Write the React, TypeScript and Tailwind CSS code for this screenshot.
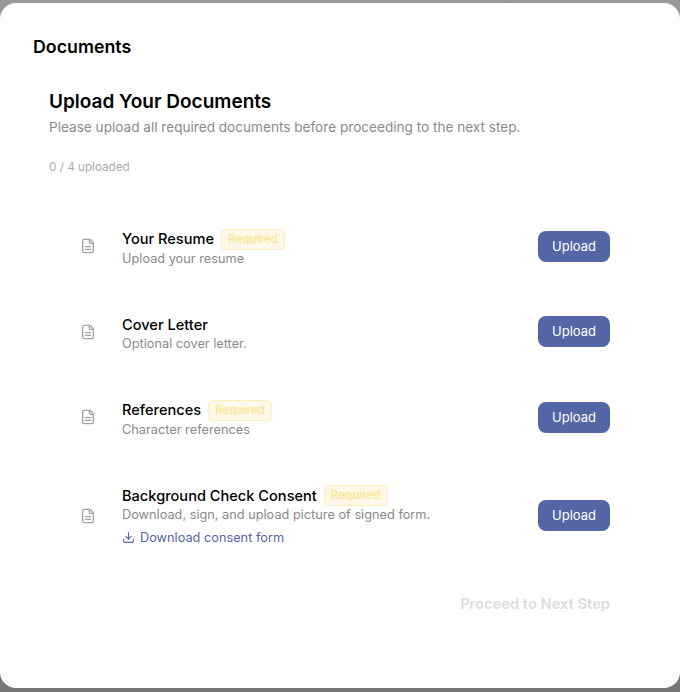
import { Download } from "lucide-react";

const docs = [
  { title: "Your Resume", required: true, desc: "Upload your resume" },
  { title: "Cover Letter", required: false, desc: "Optional cover letter." },
  { title: "References", required: true, desc: "Character references" },
  { title: "Background Check Consent", required: true, desc: "Download, sign, and upload picture of signed form.", link: true },
];

function FileIcon() {
  return (
    <svg width="16" height="16" viewBox="0 0 24 24" fill="none" stroke="#a3a3a3" strokeWidth="2" strokeLinecap="round" strokeLinejoin="round" className="shrink-0">
      <path d="M15 2H6a2 2 0 0 0-2 2v16a2 2 0 0 0 2 2h12a2 2 0 0 0 2-2V7Z" />
      <path d="M14 2v4a2 2 0 0 0 2 2h4" />
      <path d="M16 13H8" />
      <path d="M16 17H8" />
    </svg>
  );
}

export default function App() {
  return (
    <div className="h-[692px] w-[680px] overflow-hidden bg-[linear-gradient(#999999,#767676)] pt-[3px] pb-[4px] font-['Inter',sans-serif]">
      <div className="h-full rounded-2xl bg-white pt-[33px] pl-[33px] pr-[70px]">
        <h2 className="text-[17.8px] leading-[22px] font-semibold text-black">Documents</h2>
        <div className="mt-[30px] pl-4">
          <h3 className="text-[19px] leading-[28px] font-semibold text-black">Upload Your Documents</h3>
          <p className="mt-[1px] text-[13.6px] leading-[20px] text-[#8a8a8a]">Please upload all required documents before proceeding to the next step.</p>
          <p className="mt-[22px] text-[11.7px] leading-[16px] text-[#ababab]">0 / 4 uploaded</p>
          <div className="mt-[28.6px]">
            {docs.map((d) => (
              <div key={d.title} className="flex min-h-[85.5px] items-center py-[21.25px] pl-[31px]">
                <FileIcon />
                <div className="mt-1 ml-[26px] flex-1">
                  <div className="flex items-center gap-[7px]">
                    <span className="text-[14.6px] leading-[20px] font-medium text-black">{d.title}</span>
                    {d.required && (
                      <span className="rounded-[4px] border border-[#fdeebc] bg-[#fff8e8] px-[6px] text-[11.7px] leading-[19px] font-medium text-[#fde58f]">Required</span>
                    )}
                  </div>
                  <p className="text-[12.75px] leading-[18px] text-[#8a8a8a]">{d.desc}</p>
                  {d.link && (
                    <a className="mt-[1.5px] flex items-center gap-[5px] text-[12.75px] leading-[24px] text-[#5566a6]">
                      <Download size={13} strokeWidth={2} />
                      Download consent form
                    </a>
                  )}
                </div>
                <button className="h-[31px] w-[72px] rounded-lg bg-[#5566a6] text-[13px] text-white">Upload</button>
              </div>
            ))}
          </div>
          <div className="mt-[23px] flex justify-end">
            <span className="text-[14.7px] leading-[20px] font-semibold text-[#dcdcdc]">Proceed to Next Step</span>
          </div>
        </div>
      </div>
    </div>
  );
}
